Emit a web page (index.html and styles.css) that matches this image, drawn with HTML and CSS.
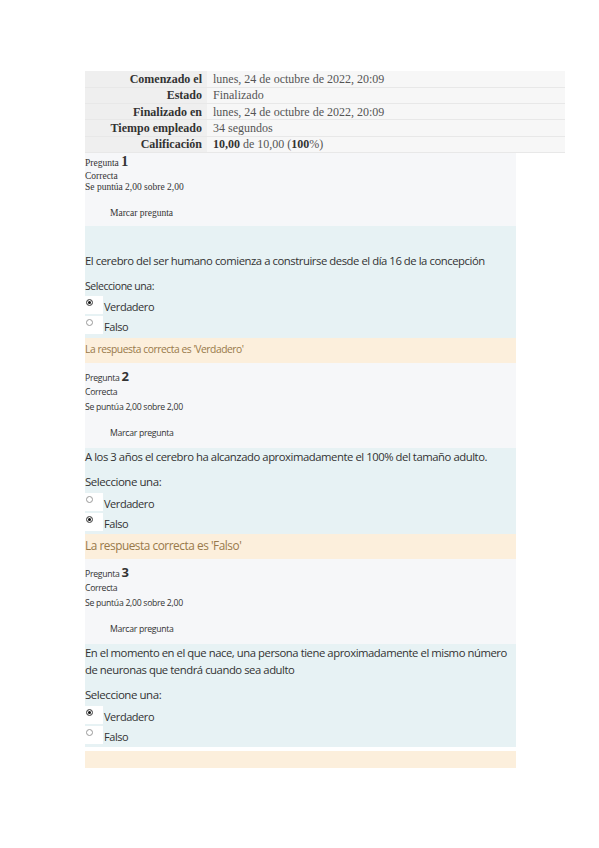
FILE: index.html
```html
<!DOCTYPE html>
<html lang="es">
	<head>
		<meta charset="UTF-8" />
		<title>Revisión del intento</title>
		<link rel="stylesheet" href="styles.css">
	</head>
	<body>
		<div id="page">
			<table class="summary">
				<tr><th>Comenzado el</th><td>lunes, 24 de octubre de 2022, 20:09</td></tr>
				<tr><th>Estado</th><td>Finalizado</td></tr>
				<tr><th>Finalizado en</th><td>lunes, 24 de octubre de 2022, 20:09</td></tr>
				<tr><th>Tiempo empleado</th><td>34 segundos</td></tr>
				<tr><th>Calificación</th><td><b>10,00</b> de 10,00 (<b>100</b>%)</td></tr>
			</table>

			<!-- pregunta 1 -->
			<div class="que que_first">
				<div class="info info_serif">
					<div class="qno">Pregunta <span class="num">1</span></div>
					<div>Correcta</div>
					<div>Se puntúa 2,00 sobre 2,00</div>
					<div class="flag">Marcar pregunta</div>
				</div>
				<div class="formulation">
					<div class="qtext">El cerebro del ser humano comienza a construirse desde el día 16 de la concepción</div>
					<div class="prompt">Seleccione una:</div>
					<div class="opt"><span class="radio on"></span>Verdadero</div>
					<div class="opt"><span class="radio"></span>Falso</div>
				</div>
				<div class="outcome">La respuesta correcta es 'Verdadero'</div>
			</div>

			<!-- pregunta 2 -->
			<div class="que">
				<div class="info">
					<div class="qno">Pregunta <span class="num">2</span></div>
					<div>Correcta</div>
					<div>Se puntúa 2,00 sobre 2,00</div>
					<div class="flag">Marcar pregunta</div>
				</div>
				<div class="formulation">
					<div class="qtext">A los 3 años el cerebro ha alcanzado aproximadamente el 100% del tamaño adulto.</div>
					<div class="prompt">Seleccione una:</div>
					<div class="opt"><span class="radio"></span>Verdadero</div>
					<div class="opt"><span class="radio on"></span>Falso</div>
				</div>
				<div class="outcome">La respuesta correcta es 'Falso'</div>
			</div>

			<!-- pregunta 3 -->
			<div class="que">
				<div class="info">
					<div class="qno">Pregunta <span class="num">3</span></div>
					<div>Correcta</div>
					<div>Se puntúa 2,00 sobre 2,00</div>
					<div class="flag">Marcar pregunta</div>
				</div>
				<div class="formulation">
					<div class="qtext">En el momento en el que nace, una persona tiene aproximadamente el mismo número de neuronas que tendrá cuando sea adulto</div>
					<div class="prompt">Seleccione una:</div>
					<div class="opt"><span class="radio on"></span>Verdadero</div>
					<div class="opt"><span class="radio"></span>Falso</div>
				</div>
				<div class="outcome outcome_empty"></div>
			</div>
		</div>
	</body>
</html>
```

FILE: styles.css
```css
* {
	margin: 0;
	padding: 0;
	box-sizing: border-box;
}

body {
	background: #fff;
	font-family: "Open Sans", sans-serif;
	color: #333;
}

#page {
	width: 431px;
	margin: 71px 0 0 85px;
}

/* tabla resumen */
.summary {
	width: 480px;
	border-collapse: collapse;
	font-family: "Liberation Serif", serif;
	font-size: 12px;
}
.summary tr {
	height: 16.3px;
	border-bottom: 1px solid #e8e8e8;
}
.summary th {
	width: 122px;
	padding-right: 5px;
	text-align: right;
	background: #efefef;
	color: #333;
	line-height: 14px;
}
.summary td {
	padding-left: 6px;
	background: #f7f7f7;
	color: #555;
	line-height: 14px;
}
.summary td b {
	color: #333;
}

/* preguntas */
.info {
	background: #f6f7f9;
	padding: 6px 0 7px;
	font-size: 8.7px;
	line-height: 14.5px;
	letter-spacing: -0.3px;
	color: #333;
}
.info .num {
	font-size: 13px;
	font-weight: bold;
}
.info .flag {
	margin-top: 12px;
	padding-left: 25px;
}
.info_serif {
	font-family: "Liberation Serif", serif;
	font-size: 9.5px;
	letter-spacing: 0;
	padding: 1px 0 7px;
	line-height: 11px;
}
.info_serif .qno {
	line-height: 16px;
}
.info_serif .num {
	font-size: 14px;
}
.info_serif .flag {
	margin-top: 15px;
}

.formulation {
	background: #e7f2f4;
	padding: 0 0 3px;
	font-size: 11.5px;
	letter-spacing: -0.45px;
	color: #333;
}
.qtext {
	padding-top: 0;
	line-height: 17px;
	font-size: 11.3px;
}
.prompt {
	margin-top: 8px;
	line-height: 18px;
}
.opt {
	display: flex;
	align-items: flex-end;
	height: 20px;
	line-height: 14px;
	font-size: 11px;
}
.radio {
	position: relative;
	width: 18px;
	height: 18px;
	margin-right: 1px;
	background: #fff;
}
.radio::before {
	content: "";
	position: absolute;
	left: 1px;
	top: 3px;
	width: 5px;
	height: 5px;
	border: 1px solid #999;
	border-radius: 50%;
	background: #fff;
}
.radio.on::before {
	background: #111;
	border-color: #666;
	box-shadow: inset 0 0 0 1px #fff;
}

.outcome {
	background: #fcefdc;
	height: 25px;
	padding-top: 3px;
	font-size: 11.8px;
	letter-spacing: -0.45px;
	color: #98794a;
}
.outcome_empty {
	margin-top: 4px;
	height: 17px;
}

/* la primera pregunta sale más pequeña */
.que_first .qtext {
	padding-top: 26px;
}
.que_first .prompt {
	font-size: 10.5px;
	margin-top: 9px;
	line-height: 16px;
}
.que_first .formulation {
	padding-bottom: 4px;
}
.que_first .outcome {
	font-size: 10.3px;
	padding-top: 4px;
}
```
